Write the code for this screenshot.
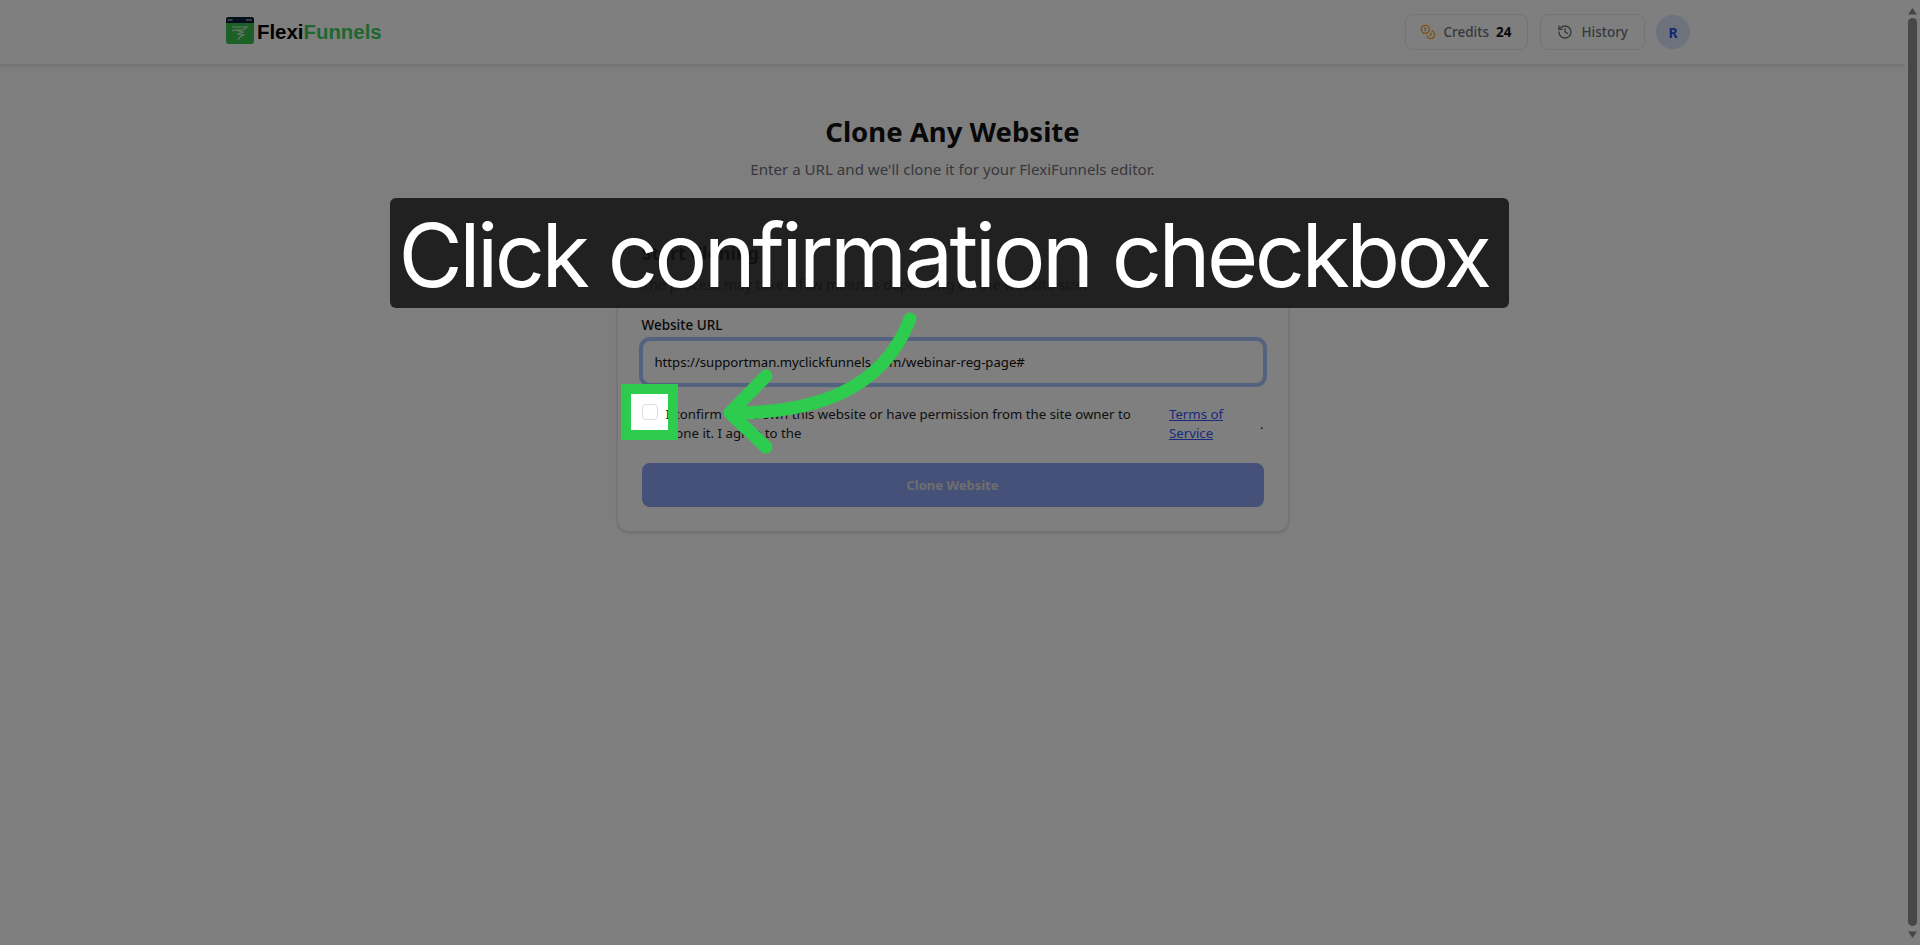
<div class="shell">
  <div class="page">
    <header class="topbar">
      <div class="brand">
        <svg class="logo-icon" viewBox="0 0 28 27" width="28" height="27" aria-hidden="true">
          <rect x="0" y="0" width="28" height="27" rx="2.5" fill="#38c04f" />
          <path d="M0 6V2.5A2.5 2.5 0 0 1 2.5 0h23A2.5 2.5 0 0 1 28 2.5V6z" fill="#0c1a3a" />
          <path d="M1.5 3h5M20 3h6" stroke="#cfe3d4" stroke-width="1" />
          <path d="M6 10h15l-4 3H9l8 2-5 2 6 1-4 2-2 3M9 13l-3 1" fill="none" stroke="#d6f0da" stroke-width="1.1" />
        </svg>
        <span class="wordmark"><span class="flexi">Flexi</span><span class="funnels">Funnels</span></span>
      </div>
      <nav class="actions">
        <button class="pill credits">
          <svg viewBox="0 0 24 24" width="16" height="16" class="coin"><circle cx="8" cy="8" r="6" /><path d="M18.09 10.37A6 6 0 1 1 10.34 18" /><path d="M7 6h1v4" /><path d="m16.71 13.88.7.71-2.82 2.82" /></svg>
          <span>Credits</span><strong>24</strong>
        </button>
        <button class="pill history">
          <svg viewBox="0 0 24 24" width="16" height="16" class="clock"><path d="M3 12a9 9 0 1 0 9-9 9.75 9.75 0 0 0-6.74 2.74L3 8" /><path d="M3 3v5h5" /><path d="M12 7v5l4 2" /></svg>
          <span>History</span>
        </button>
        <div class="avatar">R</div>
      </nav>
    </header>

    <main class="content">
      <h1>Clone Any Website</h1>
      <p class="lead">Enter a URL and we'll clone it for your FlexiFunnels editor.</p>
      <section class="card">
        <h2>Start Cloning</h2>
        <p class="hint">The process may take a few minutes depending on the website size.</p>
        <label class="url-label" for="url">Website URL</label>
        <input id="url" class="url" value="https://supportman.myclickfunnels.com/webinar-reg-page#" readonly />
        <label class="consent">
          <input type="checkbox" class="check" />
          <span>I confirm that I own this website or have permission from the site owner to clone it. I agree to the</span>
          <a href="#terms">Terms of Service</a>
          <span>.</span>
        </label>
        <button class="submit" disabled>Clone Website</button>
      </section>
    </main>
  </div>
  <aside class="scrollbar">
    <svg width="15" height="15" viewBox="0 0 15 15"><path d="M7.5 5 12 11.5H3z" /></svg>
    <div class="thumb"></div>
    <svg width="15" height="15" viewBox="0 0 15 15"><path d="M7.5 11 12 4.5H3z" /></svg>
  </aside>
</div>

<div class="spotlight"></div>
<div class="caption">Click confirmation checkbox</div>
<svg class="arrow" width="1920" height="945" viewBox="0 0 1920 945" aria-hidden="true">
  <path d="M910 319C882 392 812 413 731 413" />
  <path d="M766 376 730 413 766 447" />
</svg>

<style>
  :global(body) {
    margin: 0;
    background: #fff;
    overflow: hidden;
  }
  .shell {
    display: flex;
    height: 945px;
    font-family: "Noto Sans", "Open Sans", sans-serif;
    color: #111;
  }
  .page {
    flex: 1;
    min-width: 0;
    background: #fcfdff;
  }
  .topbar {
    display: flex;
    align-items: center;
    justify-content: space-between;
    height: 64px;
    padding: 0 215px 0 226px;
    background: #fff;
    border-bottom: 1px solid #e5e7eb;
    box-shadow: 0 1px 3px rgba(0, 0, 0, 0.12);
    box-sizing: content-box;
  }
  .brand {
    display: flex;
    align-items: center;
    gap: 3px;
    margin-top: -4px;
  }
  .wordmark {
    font-family: "Liberation Sans", Arial, sans-serif;
    font-weight: 700;
    font-size: 20.4px;
    margin-top: 4px;
  }
  .flexi {
    color: #000;
  }
  .funnels {
    color: #3cd05e;
  }
  .actions {
    display: flex;
    align-items: center;
    gap: 12px;
  }
  .pill {
    display: flex;
    align-items: center;
    gap: 8px;
    height: 36px;
    padding: 0 16px;
    border: 1px solid #e8e9ec;
    border-radius: 8px;
    background: #fff;
    font: 500 13.5px "Noto Sans", sans-serif;
    color: #6f7177;
  }
  .credits {
    padding: 0 16px 0 14px;
    gap: 7px;
  }
  .pill svg {
    fill: none;
    stroke-width: 2;
    stroke-linecap: round;
    stroke-linejoin: round;
  }
  .coin {
    stroke: #ffa51f;
  }
  .clock {
    stroke: #6f7177;
  }
  .pill strong {
    color: #111;
    font-weight: 700;
  }
  .avatar {
    width: 34px;
    height: 34px;
    margin-left: -1px;
    border-radius: 50%;
    background: #dbe4fb;
    color: #2a50e0;
    display: flex;
    align-items: center;
    justify-content: center;
    font-size: 14px;
    font-weight: 700;
  }
  .content {
    display: flex;
    flex-direction: column;
    align-items: center;
    padding-top: 47px;
  }
  h1 {
    margin: 0;
    font-size: 27.5px;
    line-height: 40px;
    font-weight: 700;
    color: #111;
  }
  .lead {
    margin: 5px 0 0;
    font-size: 15.1px;
    line-height: 24px;
    color: #6f7177;
  }
  .card {
    display: flex;
    flex-direction: column;
    box-sizing: border-box;
    width: 672px;
    margin-top: 33px;
    padding: 24px 24px 24px;
    background: #fff;
    border: 1px solid #e5e7eb;
    border-radius: 12px;
    box-shadow: 0 1px 3px rgba(0, 0, 0, 0.16);
  }
  h2 {
    margin: 0;
    font-size: 18px;
    line-height: 28px;
    font-weight: 700;
    color: #111;
  }
  .hint {
    margin: 8px 0 0;
    font-size: 14px;
    line-height: 20px;
    color: #4b5563;
  }
  .url-label {
    margin-top: 20px;
    font-size: 13.5px;
    line-height: 20px;
    font-weight: 500;
    color: #111;
  }
  .url {
    box-sizing: border-box;
    height: 44px;
    margin-top: 5px;
    padding: 0 12px;
    border: 1px solid #a4c4ff;
    border-radius: 8px;
    outline: none;
    box-shadow: 0 0 0 3px #a4c4ff;
    font: 13.15px "Noto Sans", sans-serif;
    color: #111;
    background: #fff;
  }
  .consent {
    display: flex;
    gap: 8px;
    margin-top: 20px;
    font-size: 13.25px;
    line-height: 19px;
    color: #222;
  }
  .consent span,
  .consent a {
    padding-top: 1px;
  }
  .check {
    appearance: none;
    flex: none;
    width: 16px;
    height: 16px;
    margin: 0;
    border: 1px solid #dcdde0;
    border-radius: 4px;
    background: #fff;
  }
  .consent a {
    flex: 0 0 83px;
    color: #3355ff;
    text-decoration: underline;
  }
  .consent span:last-child {
    align-self: center;
  }
  .submit {
    height: 44px;
    margin-top: 20px;
    border: 0;
    border-radius: 8px;
    background: #8ba3f0;
    color: #ddd;
    font: 700 13px "Noto Sans", sans-serif;
  }
  .scrollbar {
    flex: none;
    width: 15px;
    background: #fff;
    display: flex;
    flex-direction: column;
    align-items: center;
    justify-content: space-between;
    padding: 3px 0;
    box-sizing: border-box;
  }
  .scrollbar svg {
    fill: #8c8c8c;
    flex: none;
  }
  .thumb {
    flex: 1;
    width: 9px;
    margin: 0 0 1px;
    border-radius: 5px;
    background: #8f8f8f;
  }
  .spotlight {
    position: fixed;
    left: 631px;
    top: 394px;
    width: 37px;
    height: 36px;
    outline: 10px solid #2ecc4e;
    box-shadow: 0 0 0 3000px rgba(0, 0, 0, 0.5);
  }
  .caption {
    position: fixed;
    left: 390px;
    top: 198px;
    box-sizing: border-box;
    width: 1119px;
    height: 110px;
    padding: 3px 12px 0 0;
    display: flex;
    align-items: center;
    justify-content: center;
    border-radius: 6px;
    background: rgba(17, 17, 17, 0.86);
    color: #fff;
    font: 400 88px/1 Inter, sans-serif;
    letter-spacing: -3.5px;
    white-space: nowrap;
  }
  .arrow {
    position: fixed;
    left: 0;
    top: 0;
    fill: none;
    stroke: #2ecc4e;
    stroke-width: 13;
    stroke-linecap: round;
    stroke-linejoin: round;
  }
</style>
